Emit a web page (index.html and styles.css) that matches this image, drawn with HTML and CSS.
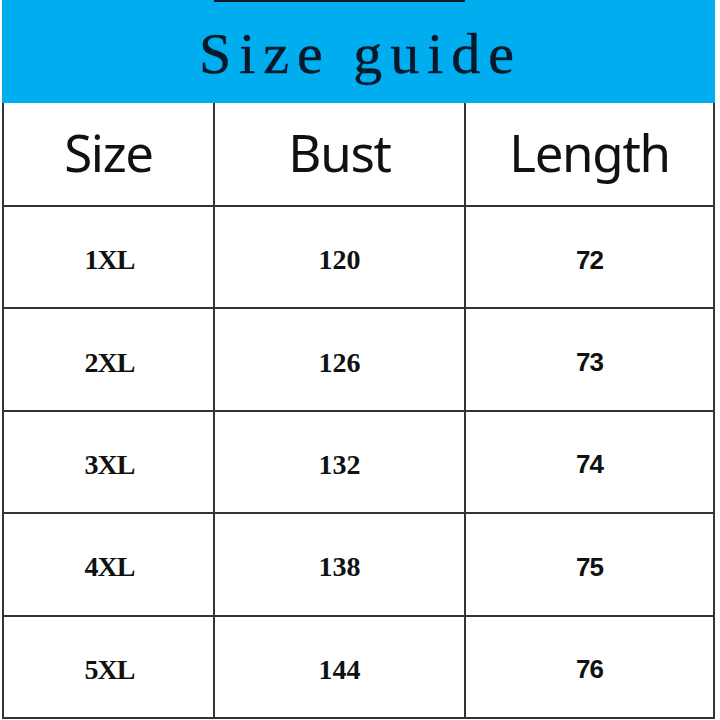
FILE: index.html
```html
<!DOCTYPE html>
<html>
<head>
<meta charset="utf-8">
<link rel="stylesheet" href="styles.css">
</head>
<body>
<div class="sheet">
  <div class="banner">
    <span class="topbar"></span>
    <h1 class="title">Size guide</h1>
  </div>
  <div class="grid">
    <div class="cell head">Size</div>
    <div class="cell head">Bust</div>
    <div class="cell head">Length</div>

    <div class="cell size">1XL</div>
    <div class="cell bust">120</div>
    <div class="cell len">72</div>

    <div class="cell size">2XL</div>
    <div class="cell bust">126</div>
    <div class="cell len">73</div>

    <div class="cell size">3XL</div>
    <div class="cell bust">132</div>
    <div class="cell len">74</div>

    <div class="cell size">4XL</div>
    <div class="cell bust">138</div>
    <div class="cell len">75</div>

    <div class="cell size">5XL</div>
    <div class="cell bust">144</div>
    <div class="cell len">76</div>
  </div>
</div>
</body>
</html>
```

FILE: styles.css
```css
html, body {
  margin: 0;
  padding: 0;
  background: #ffffff;
}

.sheet {
  margin-left: 2px;
  width: 713px;
}

.banner {
  position: relative;
  height: 103px;
  background: #00aeef;
  display: flex;
  align-items: center;
  justify-content: center;
}

.topbar {
  position: absolute;
  top: 0;
  left: 212px;
  width: 251px;
  height: 2px;
  background: #0b1a24;
}

.title {
  margin: 0;
  padding-top: 4px;
  padding-left: 4px;
  font-family: "Liberation Serif", serif;
  font-weight: normal;
  font-size: 58px;
  letter-spacing: 8px;
  color: #07182a;
  -webkit-text-stroke: 0.4px #07182a;
  line-height: 1;
}

.grid {
  display: grid;
  grid-template-columns: 209px 249px 247px;
  grid-template-rows: 102px repeat(5, 100.4px);
  gap: 2px;
  padding: 0 2px 2px 2px;
  background: #333333;
}

.cell {
  background: #ffffff;
  display: flex;
  align-items: center;
  justify-content: center;
  color: #111111;
}

.head {
  font-family: "Noto Sans", sans-serif;
  font-size: 51px;
  letter-spacing: -1.3px;
  padding-bottom: 4px;
}

.size, .bust {
  font-family: "Liberation Serif", serif;
  font-weight: bold;
  font-size: 28px;
  padding-top: 6px;
}

.size {
  letter-spacing: -1px;
  padding-left: 2px;
}

.len {
  font-family: "Liberation Sans", sans-serif;
  font-weight: bold;
  font-size: 26px;
  letter-spacing: -1px;
  padding-top: 6px;
}
```
